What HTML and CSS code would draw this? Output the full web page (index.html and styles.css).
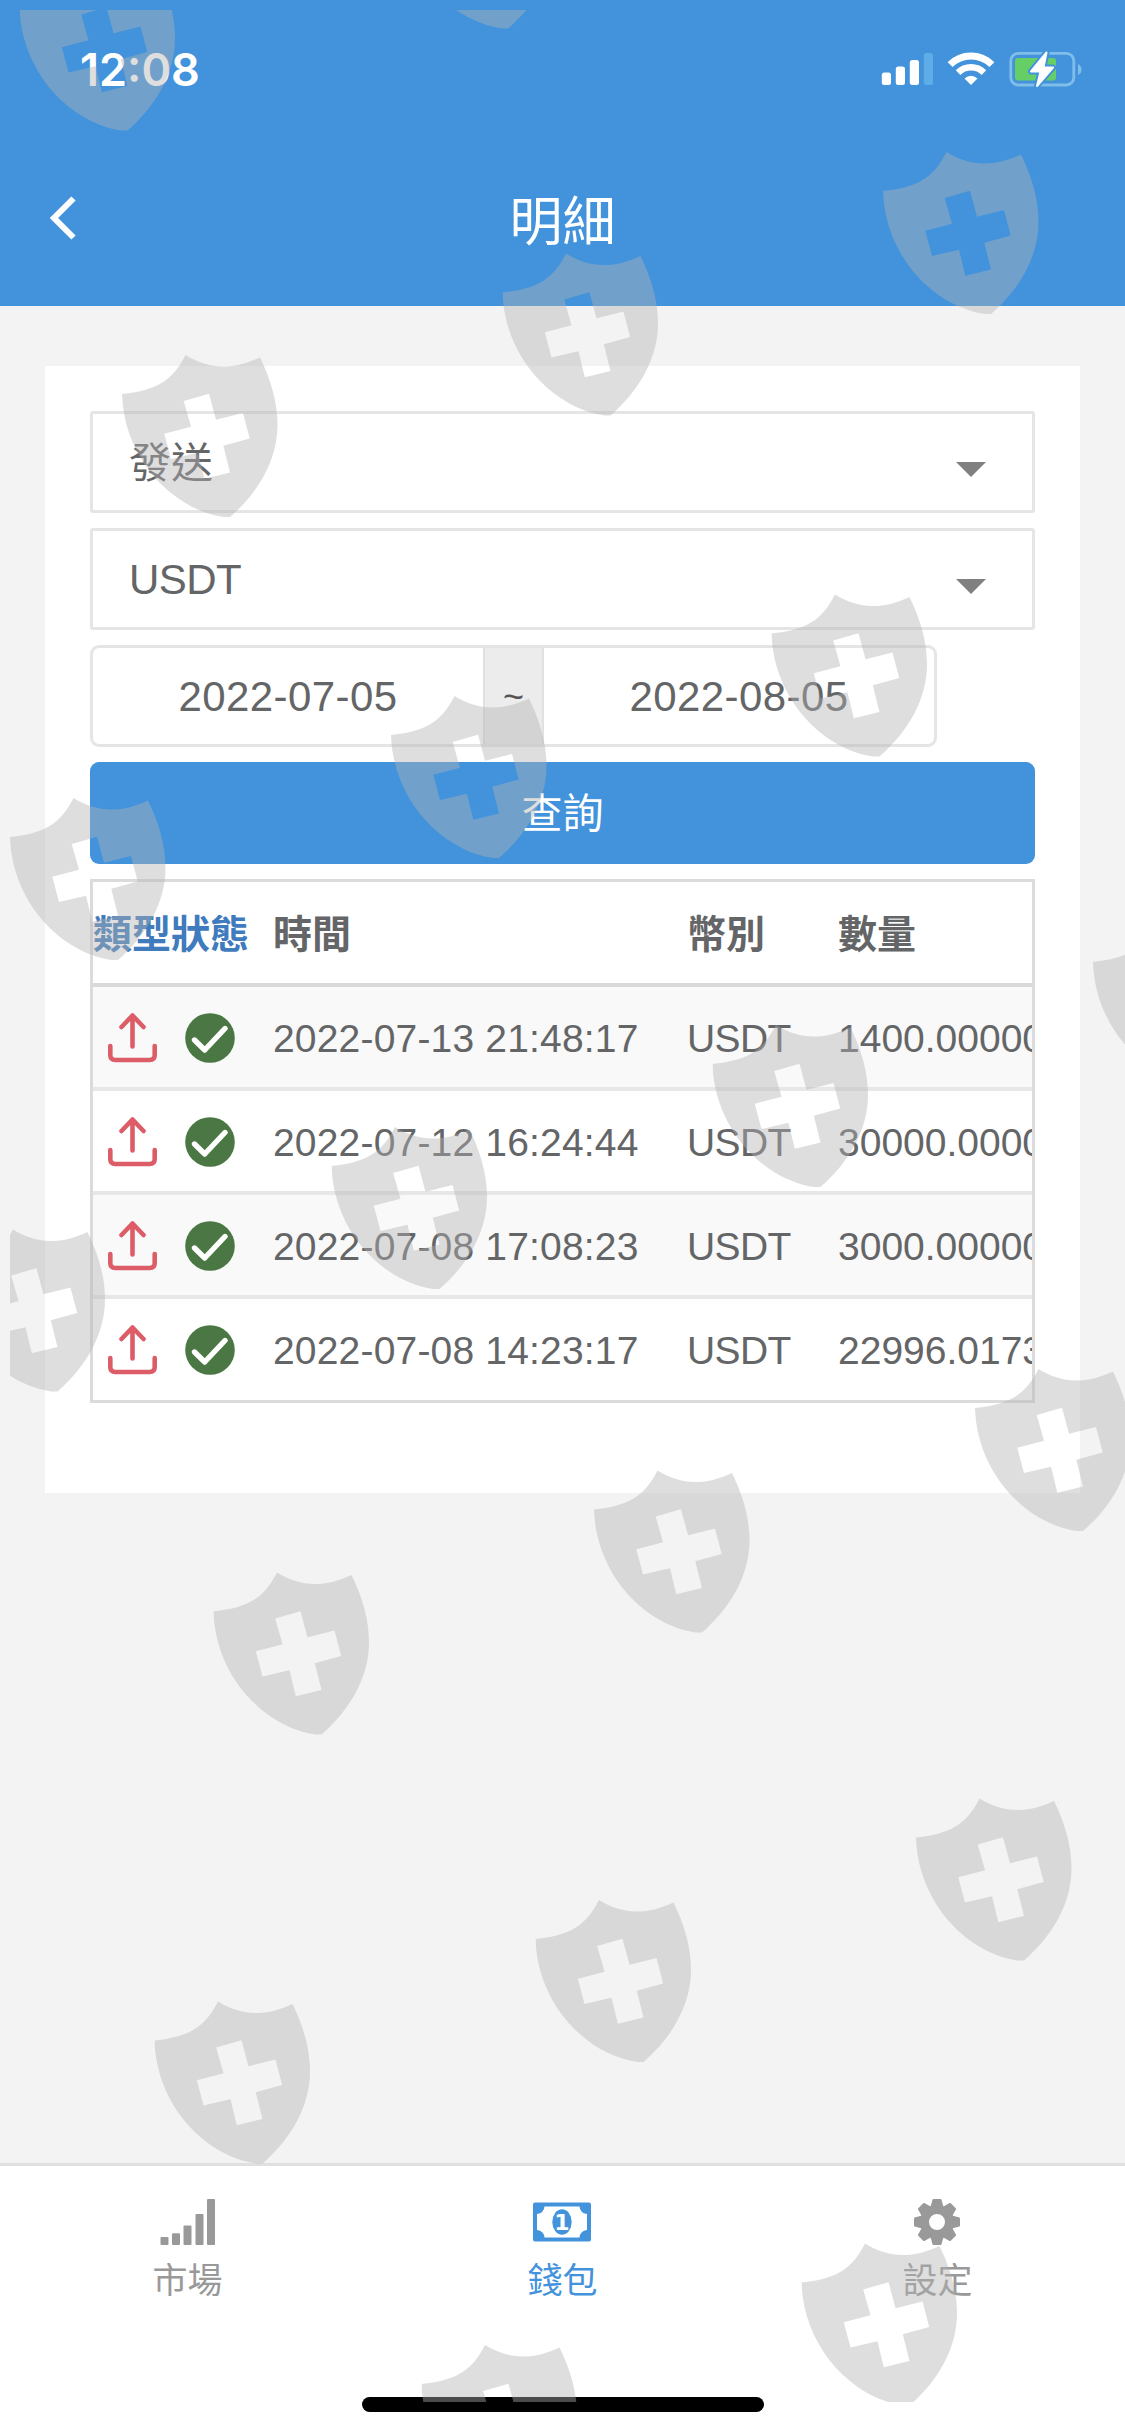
FILE: index.html
```html
<!DOCTYPE html>
<html lang="zh-Hant">
<head>
  <meta charset="UTF-8" />
  <meta name="viewport" content="width=device-width, initial-scale=1.0" />
  <title>明細</title>
  <link rel="stylesheet" href="styles.css">
</head>
<body>
  <!-- shared icons -->
  <svg class="defs" width="0" height="0">
    <symbol id="shield" viewBox="0 0 156 163">
      <path fill-rule="evenodd" d="M63.5 0C76 7.500 88 11.500 101 11.500C114 11.500 126 8 138 2.400C149 25 155.500 47 155.500 70C155.500 105 136 138 108 162L102 162C52 155 2 105 0 39C33 35.500 50 27 63.500 0ZM61.700 46L69 71.700L42.300 78.700L49 104L76 97.700L82.300 123.700L108 117.400L101.300 90.700L127.700 83.400L121 58L94 64.700L87 38.700Z"/>
    </symbol>
    <symbol id="upload" viewBox="0 0 49 50">
      <path fill="none" stroke="#dc5d68" stroke-width="4.600" stroke-linecap="round" stroke-linejoin="round" d="M24.500 2.500V33.500M13.500 14L24.500 2.500L35.500 14M2.300 33V42Q2.300 47 7.300 47H41.700Q46.700 47 46.700 42V33"/>
    </symbol>
    <symbol id="check" viewBox="0 0 50 50">
      <circle cx="25" cy="25" r="24.800" fill="#4a7743"/>
      <path fill="none" stroke="#fff" stroke-width="5.400" stroke-linecap="round" stroke-linejoin="round" d="M9.500 27L19.700 37L40 15.500"/>
    </symbol>
  </svg>

  <div class="app">
    <header class="header">
      <div class="status-bar">
        <span class="clock">12:08</span>
        <svg class="status-icons" width="202" height="36" viewBox="0 0 202 36">
          <g fill="#fff">
            <rect x="0.800" y="21.500" width="9.200" height="12.500" rx="2.500"/>
            <rect x="14.800" y="15.500" width="9.200" height="18.500" rx="2.500"/>
            <rect x="28.800" y="9" width="9.200" height="25" rx="2.500"/>
            <rect x="42.800" y="2" width="9.200" height="32" rx="2.500" fill="#5fade6"/>
            <path d="M90 34L83.500 27.500Q90 22 96.500 27.500Z"/>
          </g>
          <g fill="none" stroke="#fff">
            <path stroke-width="6.600" d="M77.100 21.600A18.300 18.300 0 0 1 102.900 21.600"/>
            <path stroke-width="7" d="M69.100 13.600A29.500 29.500 0 0 1 110.900 13.600"/>
          </g>
          <rect x="129.800" y="2.300" width="63" height="31.700" rx="7.500" fill="none" stroke="#80beea" stroke-width="2.800"/>
          <path d="M197 13Q200.500 14.500 200.500 18.500T197 24Z" fill="#80beea"/>
          <rect x="134" y="7" width="41" height="22.500" rx="3" fill="#66ce66"/>
          <path d="M165.500 1.500L150 20.500H159.500L156 35L172 16.500H162.500Z" fill="#4293dc" stroke="#4293dc" stroke-width="6" stroke-linejoin="round"/>
          <path d="M165.500 1.500L150 20.500H159.500L156 35L172 16.500H162.500Z" fill="#fff" stroke="#fff" stroke-width="2" stroke-linejoin="round"/>
        </svg>
      </div>
      <div class="nav-bar">
        <svg class="back" width="28" height="46" viewBox="0 0 28 46">
          <path d="M25.500 3.500L6 23L25.500 42.500" fill="none" stroke="#fff" stroke-width="6"/>
        </svg>
        <h1>明細</h1>
      </div>
    </header>

    <main class="content">
      <div class="card">
        <div class="select"><span class="zh">發送</span><span class="caret"></span></div>
        <div class="select"><span class="coin">USDT</span><span class="caret"></span></div>
        <div class="date-range">
          <span class="date">2022-07-05</span>
          <span class="addon">~</span>
          <span class="date">2022-08-05</span>
        </div>
        <button type="button" class="btn-query">查詢</button>
        <div class="table-box">
          <table>
            <thead>
              <tr>
                <th class="col-icon link">類型</th>
                <th class="col-icon link">狀態</th>
                <th class="col-time">時間</th>
                <th class="col-coin">幣別</th>
                <th class="col-amount">數量</th>
              </tr>
            </thead>
            <tbody>
              <tr>
                <td class="col-icon"><svg width="49" height="50"><use href="#upload"/></svg></td>
                <td class="col-icon"><svg width="50" height="50"><use href="#check"/></svg></td>
                <td class="time">2022-07-13 21:48:17</td>
                <td class="coin">USDT</td>
                <td>1400.000000</td>
              </tr>
              <tr>
                <td class="col-icon"><svg width="49" height="50"><use href="#upload"/></svg></td>
                <td class="col-icon"><svg width="50" height="50"><use href="#check"/></svg></td>
                <td class="time">2022-07-12 16:24:44</td>
                <td class="coin">USDT</td>
                <td>30000.000000</td>
              </tr>
              <tr>
                <td class="col-icon"><svg width="49" height="50"><use href="#upload"/></svg></td>
                <td class="col-icon"><svg width="50" height="50"><use href="#check"/></svg></td>
                <td class="time">2022-07-08 17:08:23</td>
                <td class="coin">USDT</td>
                <td>3000.000000</td>
              </tr>
              <tr>
                <td class="col-icon"><svg width="49" height="50"><use href="#upload"/></svg></td>
                <td class="col-icon"><svg width="50" height="50"><use href="#check"/></svg></td>
                <td class="time">2022-07-08 14:23:17</td>
                <td class="coin">USDT</td>
                <td>22996.0173</td>
              </tr>
            </tbody>
          </table>
        </div>
      </div>
    </main>

    <nav class="tab-bar">
      <div class="tabs">
        <a class="tab">
          <svg width="58" height="46" viewBox="0 0 58 46" fill="currentColor">
            <rect x="1.500" y="38" width="8" height="8" rx="1"/>
            <rect x="13" y="34.300" width="8" height="11.700" rx="1"/>
            <rect x="24.500" y="26.500" width="8" height="19.500" rx="1"/>
            <rect x="36.500" y="15" width="8" height="31" rx="1"/>
            <rect x="48" y="0" width="8" height="46" rx="1"/>
          </svg>
          <span>市場</span>
        </a>
        <a class="tab active">
          <svg width="60" height="46" viewBox="0 0 60 46">
            <path fill="currentColor" fill-rule="evenodd" d="M2 3.500H56Q58 3.500 58 5.500V40.500Q58 42.500 56 42.500H2Q0 42.500 0 40.500V5.500Q0 3.500 2 3.500ZM11.500 7.500Q11 14 4 15V31Q11 32 11.500 38.500H46.500Q47 32 54 31V15Q47 14 46.500 7.500Z"/>
            <ellipse cx="29" cy="23" rx="9.700" ry="12.700" fill="currentColor"/>
            <text x="29" y="31" class="coin-digit">1</text>
          </svg>
          <span>錢包</span>
        </a>
        <a class="tab">
          <svg width="48" height="46" viewBox="-23 -23 48 46">
            <circle r="12.500" fill="none" stroke="currentColor" stroke-width="9"/>
            <path id="tooth" fill="currentColor" d="M-6.500 -15L-4.500 -22.300Q-4.300 -23 -3.500 -23H3.500Q4.300 -23 4.500 -22.300L6.500 -15Z"/>
            <use href="#tooth" transform="rotate(45)"/>
            <use href="#tooth" transform="rotate(90)"/>
            <use href="#tooth" transform="rotate(135)"/>
            <use href="#tooth" transform="rotate(180)"/>
            <use href="#tooth" transform="rotate(225)"/>
            <use href="#tooth" transform="rotate(270)"/>
            <use href="#tooth" transform="rotate(315)"/>
          </svg>
          <span>設定</span>
        </a>
      </div>
      <div class="home-indicator"></div>
    </nav>

    <!-- shield watermark over everything -->
    <svg class="watermark" width="1115" height="2392" viewBox="10 10 1115 2392">
      <use href="#shield" width="156" height="163" x="19.500" y="-31.500"/>
      <use href="#shield" width="156" height="163" x="400" y="-133.500"/>
      <use href="#shield" width="156" height="163" x="883" y="152"/>
      <use href="#shield" width="156" height="163" x="502.500" y="253.500"/>
      <use href="#shield" width="156" height="163" x="122" y="355"/>
      <use href="#shield" width="156" height="163" x="771.500" y="594.500"/>
      <use href="#shield" width="156" height="163" x="391" y="696"/>
      <use href="#shield" width="156" height="163" x="10" y="798"/>
      <use href="#shield" width="156" height="163" x="1093" y="923"/>
      <use href="#shield" width="156" height="163" x="712.500" y="1025"/>
      <use href="#shield" width="156" height="163" x="331.500" y="1127"/>
      <use href="#shield" width="156" height="163" x="-50.500" y="1229.500"/>
      <use href="#shield" width="156" height="163" x="975" y="1369"/>
      <use href="#shield" width="156" height="163" x="594" y="1470.500"/>
      <use href="#shield" width="156" height="163" x="213.500" y="1572.500"/>
      <use href="#shield" width="156" height="163" x="916" y="1798.500"/>
      <use href="#shield" width="156" height="163" x="535.500" y="1900"/>
      <use href="#shield" width="156" height="163" x="154.500" y="2001.500"/>
      <use href="#shield" width="156" height="163" x="801.500" y="2243.500"/>
      <use href="#shield" width="156" height="163" x="421.500" y="2345"/>
    </svg>
  </div>
</body>
</html>
```

FILE: styles.css
```css
* {
  box-sizing: border-box;
}
body {
  margin: 0;
  background: #f3f3f3;
  color: #646567;
  font-family: "Liberation Sans", "Noto Sans CJK TC", sans-serif;
  font-size: 42px;
}
svg {
  display: block;
}
.defs {
  position: absolute;
}
.app {
  position: relative;
  display: flex;
  flex-direction: column;
  width: 1125px;
  height: 2436px;
  overflow: hidden;
}

/* header */
.header {
  height: 306px;
  background: #4293dc;
  color: #fff;
}
.status-bar {
  display: flex;
  align-items: center;
  justify-content: space-between;
  height: 138px;
  padding: 0 42px 0 80px;
}
.clock {
  font-family: Inter, sans-serif;
  font-size: 45px;
  font-weight: 600;
}
.nav-bar {
  display: grid;
  grid-template-columns: 1fr auto 1fr;
  align-items: center;
  height: 160px;
  padding: 0 48px;
}
h1 {
  grid-column: 2;
  margin: 10px 0 0;
  font-size: 53px;
  font-weight: 400;
  line-height: 1.4;
}

/* card */
.content {
  flex: 1;
  padding: 60px 45px 0;
}
.card {
  display: flex;
  flex-direction: column;
  gap: 15px;
  height: 1127px;
  padding: 45px;
  background: #fff;
}
.select {
  display: flex;
  align-items: center;
  justify-content: space-between;
  height: 102px;
  padding: 2px 46px 0 36px;
  border: 3px solid #e5e5e5;
  border-radius: 3px;
}
.zh {
  padding-bottom: 8px;
}
.coin {
  letter-spacing: -0.6px;
}
.caret {
  margin-top: 12px;
  border: 15px solid transparent;
  border-top-color: #808080;
  border-bottom: 0;
}
.date-range {
  display: flex;
  width: 847px;
  height: 102px;
  border: 3px solid #e5e5e5;
  border-radius: 9px;
  line-height: 98px;
  text-align: center;
}
.date {
  flex: 1;
  letter-spacing: 0.4px;
}
.addon {
  width: 61px;
  border: solid #e1e1e1;
  border-width: 0 2px;
  background: #ececec;
  color: #555;
  font-size: 36px;
}
.btn-query {
  height: 102px;
  padding: 0 0 6px;
  border: 0;
  border-radius: 9px;
  background: #4293dc;
  color: #fff;
  font-family: inherit;
  font-size: 41px;
}

/* records */
.table-box {
  height: 524px;
  border: 3px solid #dbdbdb;
  overflow: hidden;
}
table {
  width: 1000px;
  table-layout: fixed;
  border-collapse: separate;
  border-spacing: 0;
  font-size: 39px;
}
th {
  height: 101px;
  padding: 5px 24px 0;
  text-align: left;
  line-height: 50px;
}
td {
  height: 104px;
  padding: 3px 24px 0;
  border-top: 4px solid #e7e7e7;
  white-space: nowrap;
}
tbody tr:first-child td {
  border-top-color: #d9d9d9;
}
tbody tr:nth-child(odd) {
  background: #f9f9f9;
}
.time {
  letter-spacing: 0.18px;
}
.col-icon {
  width: 78px;
  padding-left: 0;
  padding-right: 0;
}
td.col-icon svg {
  margin: -2px auto 0;
}
.link {
  color: #3f7bbd;
}
.col-time {
  width: 414px;
}
.col-coin {
  width: 151px;
}

/* bottom tabs */
.tab-bar {
  display: flex;
  flex-direction: column;
  justify-content: space-between;
  align-items: center;
  height: 273px;
  padding-bottom: 24px;
  border-top: 3px solid #e0e0e0;
  background: #fff;
}
.tabs {
  display: grid;
  grid-template-columns: repeat(3, 1fr);
  width: 100%;
  padding-top: 33px;
}
.tab {
  display: flex;
  flex-direction: column;
  align-items: center;
  gap: 11px;
  color: #999;
  font-size: 35px;
  line-height: 50px;
}
.active {
  color: #4293dc;
}
.coin-digit {
  fill: #fff;
  font: bold 22px "DejaVu Sans", sans-serif;
  text-anchor: middle;
}
.home-indicator {
  width: 402px;
  height: 15px;
  border-radius: 8px;
  background: #000;
}

.watermark {
  position: absolute;
  top: 10px;
  left: 10px;
  fill: #b3b3b3;
  opacity: 0.42;
  pointer-events: none;
}
```
